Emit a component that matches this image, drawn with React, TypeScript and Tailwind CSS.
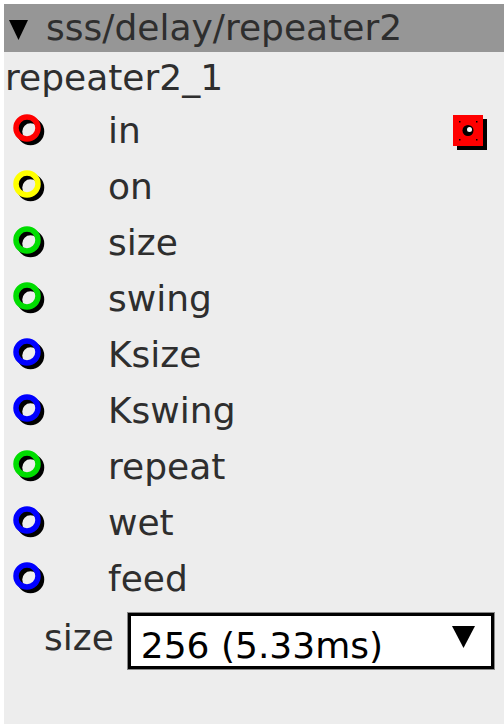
import React from "react";

const ports: { name: string; color: string }[] = [
  { name: "in", color: "#ff0000" },
  { name: "on", color: "#ffff00" },
  { name: "size", color: "#00dd00" },
  { name: "swing", color: "#00dd00" },
  { name: "Ksize", color: "#0000ff" },
  { name: "Kswing", color: "#0000ff" },
  { name: "repeat", color: "#00dd00" },
  { name: "wet", color: "#0000ff" },
  { name: "feed", color: "#0000ff" },
];

function Port({ color }: { color: string }) {
  return (
    <svg width="40" height="40" viewBox="0 0 40 40">
      <circle cx="17.5" cy="17.5" r="11" fill="none" stroke="#000" strokeWidth="5.5" />
      <circle cx="14" cy="14" r="11" fill="none" stroke={color} strokeWidth="5.5" />
    </svg>
  );
}

function OutPort() {
  return (
    <svg width="40" height="40" viewBox="0 0 40 40">
      <rect x="6" y="6" width="30" height="31" fill="#000" />
      <rect x="2" y="2" width="30" height="31" fill="#ff0000" />
      <circle cx="17" cy="17.5" r="5.5" fill="#000" />
      <circle cx="18.5" cy="16.5" r="2.5" fill="#fff" />
      <rect x="8" y="8" width="1.5" height="1.5" fill="#000" />
      <rect x="25" y="8" width="1.5" height="1.5" fill="#000" />
      <rect x="8" y="26" width="1.5" height="1.5" fill="#000" />
      <rect x="25" y="26" width="1.5" height="1.5" fill="#000" />
    </svg>
  );
}

function Tri({ w, h }: { w: number; h: number }) {
  return (
    <svg width={w} height={h} viewBox={`0 0 ${w} ${h}`}>
      <polygon points={`0,0 ${w},0 ${w / 2},${h}`} fill="#000" />
    </svg>
  );
}

export default function App() {
  return (
    <div className="w-[504px] h-[728px] bg-white pl-[4px] pt-[4px]" style={{ fontFamily: "'DejaVu Sans', sans-serif" }}>
      <div className="w-[500px] h-[720px] bg-[#ededed] flex flex-col">
        <div className="h-[48px] bg-[#969696] flex items-center text-[#2e2e2e] text-[36px] leading-none">
          <div className="ml-[5px] mr-[18px] mt-[4px]">
            <Tri w={19} h={20} />
          </div>
          <span className="-mt-[1px]">sss/delay/repeater2</span>
        </div>
        <div className="h-[51px] flex items-center pl-[1px] text-[36px] text-[#2e2e2e] leading-none pt-[1px]">
          repeater2_1
        </div>
        {ports.map((p, i) => (
          <div key={p.name} className="h-[56px] flex items-center relative text-[36px] text-[#2e2e2e] leading-none">
            <div className="w-[104px] pl-[9px] flex items-center mt-[6px]">
              <Port color={p.color} />
            </div>
            <span>{p.name}</span>
            {i === 0 && (
              <div className="absolute left-[447px] top-[10px]">
                <OutPort />
              </div>
            )}
          </div>
        ))}
        <div className="flex items-start mt-[6px] ml-[40px]">
          <span className="text-[36px] text-[#2e2e2e] leading-none mt-[7px] mr-[14px]">size</span>
          <div className="w-[366px] h-[56px] bg-white border-[3px] border-black outline outline-1 outline-[#888] flex items-center justify-between pl-[10px] pr-[16px]">
            <span className="text-[36px] text-black leading-none mt-[10px]">256 (5.33ms)</span>
            <div className="-mt-[8px]">
              <Tri w={23} h={22} />
            </div>
          </div>
        </div>
      </div>
    </div>
  );
}
